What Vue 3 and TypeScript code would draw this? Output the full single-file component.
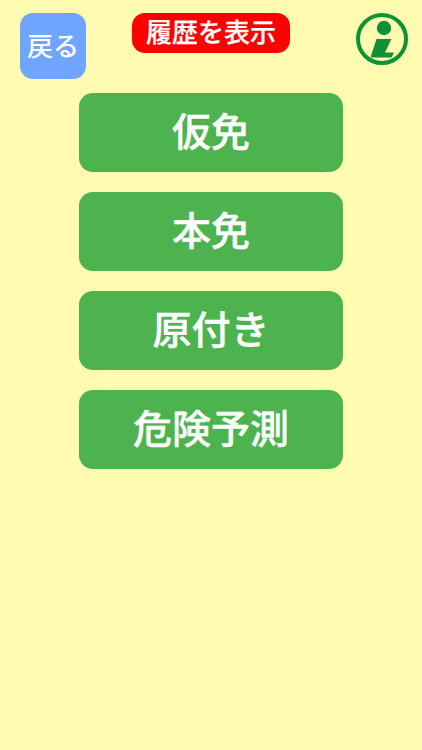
<script setup lang="ts">
const items: string[] = ['仮免', '本免', '原付き', '危険予測']
</script>

<template>
  <div class="page">
    <header class="top">
      <button class="back">戻る</button>
      <button class="history">履歴を表示</button>
      <svg class="info" viewBox="0 0 52 52" width="52" height="52" aria-label="info">
        <circle cx="26" cy="26" r="24" fill="none" stroke="#0f9136" stroke-width="4" />
        <circle cx="28" cy="15" r="7.2" fill="#0f9136" />
        <path d="M20.5 26 H35.5 L29 39.5 H38 L35.5 44.5 H14.5 Z" fill="#0f9136" />
      </svg>
    </header>
    <main class="list">
      <button v-for="item in items" :key="item" class="item">{{ item }}</button>
    </main>
  </div>
</template>

<style scoped>
.page {
  width: 422px;
  height: 750px;
  box-sizing: border-box;
  padding-top: 13px;
  background: #fffbb1;
  font-family: "Noto Sans CJK JP", "Liberation Sans", sans-serif;
  overflow: hidden;
}
button {
  border: none;
  color: #fff;
  font-family: inherit;
  font-weight: 500;
  line-height: 1;
}
.top {
  display: grid;
  grid-template-columns: 112px 158px 1fr;
  align-items: start;
  padding-left: 20px;
  height: 80px;
}
.back {
  width: 66px;
  height: 66px;
  padding: 0 0 3px;
  border-radius: 13px;
  background: #6fa4ff;
  font-size: 26px;
}
.history {
  width: 158px;
  height: 40px;
  padding: 0 0 4px;
  border-radius: 13px;
  background: #ff0000;
  font-size: 26px;
  -webkit-text-stroke: 0.25px #fff;
}
.info {
  margin-left: 66px;
}
.list {
  display: flex;
  flex-direction: column;
  align-items: center;
  gap: 20px;
}
.item {
  width: 264px;
  height: 79px;
  padding: 0 0 6px;
  border-radius: 14px;
  background: #4cb34f;
  font-size: 39px;
  -webkit-text-stroke: 0.4px #fff;
}
</style>
<style>
html, body { margin: 0; background: #fffbb1; }
</style>
